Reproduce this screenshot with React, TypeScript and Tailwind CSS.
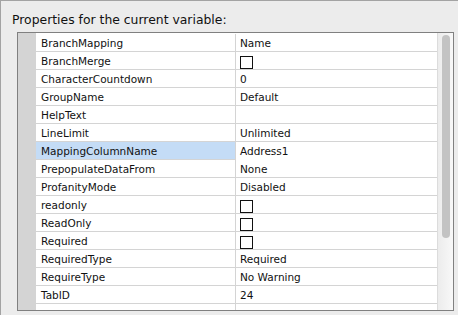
import React from "react";

type Row = { name: string; value?: string; check?: boolean; selected?: boolean };

const rows: Row[] = [
  { name: "BranchMapping", value: "Name" },
  { name: "BranchMerge", check: true },
  { name: "CharacterCountdown", value: "0" },
  { name: "GroupName", value: "Default" },
  { name: "HelpText", value: "" },
  { name: "LineLimit", value: "Unlimited" },
  { name: "MappingColumnName", value: "Address1", selected: true },
  { name: "PrepopulateDataFrom", value: "None" },
  { name: "ProfanityMode", value: "Disabled" },
  { name: "readonly", check: true },
  { name: "ReadOnly", check: true },
  { name: "Required", check: true },
  { name: "RequiredType", value: "Required" },
  { name: "RequireType", value: "No Warning" },
  { name: "TabID", value: "24" },
  { name: "", value: "" },
];

export default function App() {
  return (
    <div
      className="w-[458px] h-[315px] bg-[#ececec] border-t border-l border-[#a3a3a3] overflow-hidden flex flex-col"
      style={{ fontFamily: '"DejaVu Sans", "Liberation Sans", sans-serif' }}
    >
      <div className="h-[31px] pl-[11px] pt-[11px] text-[12.4px] leading-[16px] text-[#111]">
        Properties for the current variable:
      </div>
      <div className="ml-[16px] w-[437px] h-[279px] border border-[#808080] bg-white flex overflow-hidden">
        <div className="w-[18px] bg-[#d4d4d4] shrink-0" />
        <div className="w-[401px] flex flex-col pt-[1px]">
          {rows.map((r, i) => (
            <div key={i} className="flex h-[18px] shrink-0">
              <div
                className={`w-[199px] shrink-0 h-[18px] overflow-hidden border-b border-[#d4d4d4] pl-[5px] text-[10.5px] leading-[19px] text-[#111] ${
                  r.selected ? "bg-[#c4dcf6]" : "bg-white"
                }`}
              >
                {r.name}
              </div>
              <div className="w-[1px] bg-[#d4d4d4] shrink-0" />
              <div
                className={`w-[201px] shrink-0 h-[18px] overflow-hidden pl-[4px] text-[10.5px] leading-[19px] text-[#111] ${
                  r.selected ? "border-b border-transparent" : "border-b border-[#d4d4d4]"
                }`}
              >
                {r.check ? (
                  <div className="mt-[4px] w-[13px] h-[13px] border border-[#111] bg-white" />
                ) : (
                  r.value
                )}
              </div>
            </div>
          ))}
        </div>
        <div className="w-[16px] border-l border-[#dcdcdc] bg-gradient-to-r from-[#ececec] to-[#f8f8f8] pt-[2px] flex justify-center">
          <div className="w-[8px] h-[203px] rounded-full bg-[#c3c3c3]" />
        </div>
      </div>
    </div>
  );
}
